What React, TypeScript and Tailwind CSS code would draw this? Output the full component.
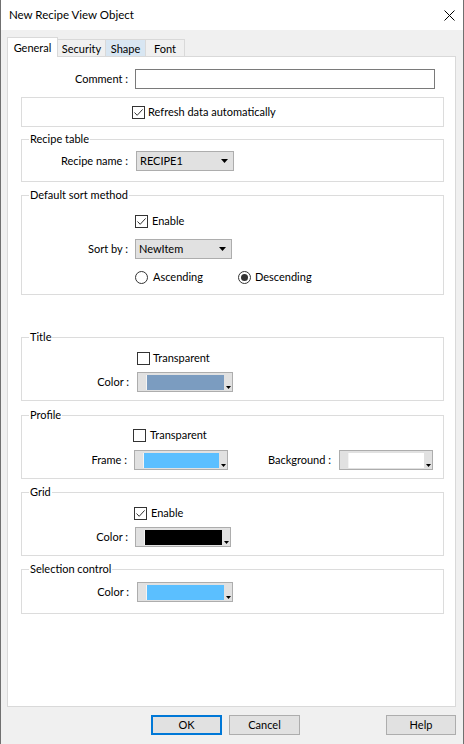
import React from "react";

function Check({ checked }: { checked?: boolean }) {
  return (
    <span className="flex h-[13px] w-[13px] shrink-0 items-center justify-center border border-[#333333] bg-white">
      {checked && (
        <svg width="11" height="11" viewBox="0 0 11 11">
          <path d="M1.5 5.5 L4.2 8.3 L9.6 2.4" fill="none" stroke="#333333" strokeWidth="1" />
        </svg>
      )}
    </span>
  );
}

function Radio({ checked }: { checked?: boolean }) {
  return (
    <span className="flex h-[13px] w-[13px] shrink-0 items-center justify-center rounded-full border border-[#333333] bg-white">
      {checked && <span className="h-[7px] w-[7px] rounded-full bg-[#333333]" />}
    </span>
  );
}

function Select({ value, className }: { value: string; className: string }) {
  return (
    <div
      className={`flex h-[20px] items-center justify-between border border-[#adadad] bg-[#e1e1e1] pl-[3px] pr-[5px] ${className}`}
    >
      <span>{value}</span>
      <svg width="7" height="4" viewBox="0 0 7 4">
        <polygon points="0,0 7,0 3.5,4" fill="#000" />
      </svg>
    </div>
  );
}

function ColorButton({ color, className }: { color: string; className: string }) {
  return (
    <div className={`flex h-[20px] border border-[#adadad] bg-[#e1e1e1] pl-[8px] pt-[2px] pb-[1px] ${className}`}>
      <span className="flex-1 border-l border-[#f4f4f4]" style={{ backgroundColor: color }} />
      <span className="flex w-[8px] items-end justify-center pb-[1px]">
        <svg width="5" height="3" viewBox="0 0 5 3">
          <polygon points="0,0 5,0 2.5,3" fill="#000" />
        </svg>
      </span>
    </div>
  );
}

function Group({
  title,
  className,
  children,
}: {
  title: string;
  className: string;
  children: React.ReactNode;
}) {
  return (
    <fieldset className={`border border-[#dcdcdc] ${className}`}>
      <legend className="ml-[7px] px-[1px] leading-[16px]">{title}</legend>
      {children}
    </fieldset>
  );
}

export default function App() {
  return (
    <div className="flex h-[744px] w-[464px] flex-col overflow-hidden border-x border-[#707070] bg-[#f0f0f0] font-['Lato','Noto_Sans',sans-serif] text-[11px] leading-[16px] text-black">
      {/* title bar */}
      <div className="flex h-[30px] shrink-0 items-center justify-between bg-white pl-[8px] pr-[8px]">
        <span className="text-[11.5px]">New Recipe View Object</span>
        <svg width="11" height="11" viewBox="0 0 11 11">
          <path d="M0.5 0.5 L10.5 10.5 M10.5 0.5 L0.5 10.5" stroke="#000" strokeWidth="1" />
        </svg>
      </div>

      {/* tabs */}
      <div className="relative z-10 ml-[6px] mt-[7px] flex h-[19px] items-end">
        <div className="-mb-px flex h-[20px] w-[51px] items-center justify-center border-x border-t border-[#d9d9d9] bg-white">
          General
        </div>
        <div className="flex h-[17px] w-[48px] items-center justify-center border-r border-t border-[#d9d9d9] pt-[1px]">
          Security
        </div>
        <div className="flex h-[17px] w-[40px] items-center justify-center border-r border-t border-[#d9d9d9] bg-[#d8e6f2] pt-[1px]">
          Shape
        </div>
        <div className="flex h-[17px] w-[39px] items-center justify-center border-r border-t border-[#d9d9d9] pt-[1px]">
          Font
        </div>
      </div>

      {/* panel */}
      <div className="ml-[6px] flex h-[651px] w-[449px] flex-col border border-[#d9d9d9] bg-white">
        <div className="mt-[12px] flex h-[20px] items-center">
          <span className="w-[120px] text-right">Comment :</span>
          <div className="ml-[7px] h-[20px] w-[300px] border border-[#7a7a7a] bg-white" />
        </div>

        <div className="ml-[13px] flex w-[423px] flex-col">
          <div className="mt-[8px] flex h-[30px] items-center border border-[#dcdcdc] pl-[110px]">
            <Check checked />
            <span className="ml-[3px]">Refresh data automatically</span>
          </div>

          <Group title="Recipe table" className="mt-[4px] pb-[10px]">
            <div className="mt-[4px] flex h-[20px] items-center">
              <span className="w-[106px] text-right">Recipe name :</span>
              <Select value="RECIPE1" className="ml-[8px] w-[98px]" />
            </div>
          </Group>

          <Group title="Default sort method" className="mt-[5px] pb-[9px]">
            <div className="mt-[10px] flex h-[16px] items-center pl-[113px]">
              <Check checked />
              <span className="ml-[4px]">Enable</span>
            </div>
            <div className="mt-[10px] flex h-[20px] items-center">
              <span className="w-[106px] text-right">Sort by :</span>
              <Select value="NewItem" className="ml-[7px] w-[97px]" />
            </div>
            <div className="mt-[10px] flex h-[16px] items-center pl-[113px]">
              <div className="flex w-[103px] items-center">
                <Radio />
                <span className="ml-[5px]">Ascending</span>
              </div>
              <Radio checked />
              <span className="ml-[4px]">Descending</span>
            </div>
          </Group>

          <Group title="Title" className="mt-[34px] pb-[8px]">
            <div className="mt-[5px] flex h-[16px] items-center pl-[115px]">
              <Check />
              <span className="ml-[3px]">Transparent</span>
            </div>
            <div className="mt-[6px] flex h-[20px] items-center">
              <span className="w-[107px] text-right">Color :</span>
              <ColorButton color="#7b9cc0" className="ml-[8px] w-[96px]" />
            </div>
          </Group>

          <Group title="Profile" className="mt-[6px] pb-[8px]">
            <div className="mt-[4px] flex h-[16px] items-center pl-[111px]">
              <Check />
              <span className="ml-[4px]">Transparent</span>
            </div>
            <div className="mt-[7px] flex h-[20px] items-center">
              <span className="w-[105px] text-right">Frame :</span>
              <ColorButton color="#5bbfff" className="ml-[7px] w-[94px]" />
              <span className="w-[103px] text-right">Background :</span>
              <ColorButton color="#ffffff" className="ml-[8px] w-[94px]" />
            </div>
          </Group>

          <Group title="Grid" className="mt-[5px] pb-[8px]">
            <div className="mt-[5px] flex h-[16px] items-center pl-[112px]">
              <Check checked />
              <span className="ml-[4px]">Enable</span>
            </div>
            <div className="mt-[6px] flex h-[20px] items-center">
              <span className="w-[106px] text-right">Color :</span>
              <ColorButton color="#000000" className="ml-[7px] w-[96px]" />
            </div>
          </Group>

          <Group title="Selection control" className="mt-[5px] pb-[11px]">
            <div className="mt-[5px] flex h-[20px] items-center">
              <span className="w-[107px] text-right">Color :</span>
              <ColorButton color="#5bbfff" className="ml-[8px] w-[96px]" />
            </div>
          </Group>
        </div>
      </div>

      {/* buttons */}
      <div className="mt-[8px] flex h-[20px]">
        <div className="ml-[150px] flex w-[71px] items-center justify-center border-2 border-[#0078d7] bg-[#e1e1e1]">
          OK
        </div>
        <div className="ml-[7px] flex w-[71px] items-center justify-center border border-[#adadad] bg-[#e1e1e1]">
          Cancel
        </div>
        <div className="ml-[86px] flex w-[70px] items-center justify-center border border-[#adadad] bg-[#e1e1e1]">
          Help
        </div>
      </div>
    </div>
  );
}
